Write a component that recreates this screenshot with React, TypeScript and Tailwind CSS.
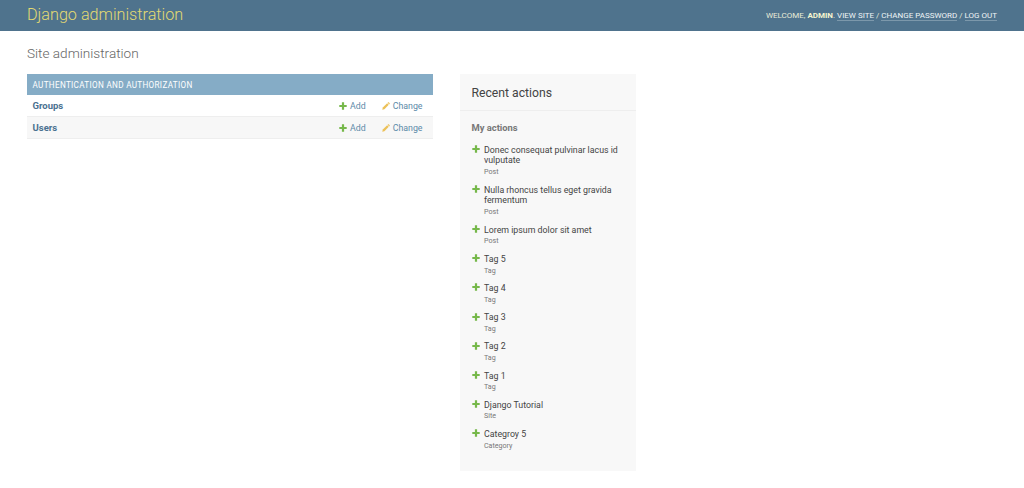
import React from 'react';

const PlusIcon = ({ className }: { className?: string }) => (
  <svg className={className} viewBox="0 0 8 8" fill="#76b84a">
    <path d="M2.9 0.3h2.2v2.6h2.6v2.2h-2.6v2.6h-2.2v-2.6h-2.6v-2.2h2.6z" />
  </svg>
);

const PencilIcon = () => (
  <svg className="w-[8px] h-[8px] shrink-0" viewBox="0 0 9 9" fill="#ecc158">
    <path d="M0.3 8.7l0.6-2.4 4.9-4.9 1.8 1.8-4.9 4.9z" />
    <path d="M6.3 0.9l0.6-0.6c0.2-0.2 0.5-0.2 0.7 0l1.1 1.1c0.2 0.2 0.2 0.5 0 0.7l-0.6 0.6z" />
  </svg>
);

const models = [
  { name: 'Groups', alt: false },
  { name: 'Users', alt: true },
];

const actions = [
  { title: ['Donec consequat pulvinar lacus id', 'vulputate'], type: 'Post' },
  { title: ['Nulla rhoncus tellus eget gravida', 'fermentum'], type: 'Post' },
  { title: ['Lorem ipsum dolor sit amet'], type: 'Post' },
  { title: ['Tag 5'], type: 'Tag' },
  { title: ['Tag 4'], type: 'Tag' },
  { title: ['Tag 3'], type: 'Tag' },
  { title: ['Tag 2'], type: 'Tag' },
  { title: ['Tag 1'], type: 'Tag' },
  { title: ['Django Tutorial'], type: 'Site' },
  { title: ['Categroy 5'], type: 'Category' },
];

const App = () => {
  return (
    <div className="min-h-[488px] bg-white font-['Roboto',sans-serif] text-[#333]">
      {/* Header */}
      <header className="h-[31px] bg-[#4f738d] flex items-center justify-between pl-[27px] pr-[27px]">
        <div className="text-[16.2px] font-light text-[#e3da72] leading-none pb-[1px]">Django administration</div>
        <div className="text-[8px] uppercase text-[#e9ecd8] whitespace-nowrap">
          Welcome, <strong className="font-bold text-[#f6f5d0]">Admin</strong>.{' '}
          <span className="text-[#eef3f6] border-b border-[#7c98ab]">View site</span> /{' '}
          <span className="text-[#eef3f6] border-b border-[#7c98ab]">Change password</span> /{' '}
          <span className="text-[#eef3f6] border-b border-[#7c98ab]">Log out</span>
        </div>
      </header>

      <main className="pl-[27px] pt-[14px]">
        <h1 className="text-[13.6px] font-light text-[#666] leading-[16px] mb-[13px]">Site administration</h1>

        <div className="flex items-start gap-[27px]">
          {/* App list */}
          <section className="w-[406px]">
            <div className="h-[21px] bg-[#85acc6] text-white text-[8.15px] uppercase tracking-[0.04em] pl-[5.5px] pt-[1px] flex items-center">
              Authentication and authorization
            </div>
            {models.map((m) => (
              <div
                key={m.name}
                className={`h-[22px] flex items-center border-b border-[#eeeeee] pl-[5.5px] pr-[10.5px] ${m.alt ? 'bg-[#f7f7f7]' : 'bg-white'}`}
              >
                <span className="text-[9.5px] font-bold text-[#4a7190] flex-1 pt-[1px]">{m.name}</span>
                <span className="flex items-center gap-[3px] text-[8.8px] text-[#5b8aa8] leading-[12px]">
                  <PlusIcon className="w-[8px] h-[8px] shrink-0" />
                  <span className="pt-[1px]">Add</span>
                </span>
                <span className="flex items-center gap-[3px] text-[8.8px] text-[#5b8aa8] leading-[12px] ml-[16px]">
                  <PencilIcon />
                  <span className="pt-[1px]">Change</span>
                </span>
              </div>
            ))}
          </section>

          {/* Recent actions */}
          <aside className="w-[176px] h-[397px] bg-[#f8f8f8] text-[#333]">
            <div className="h-[37px] border-b border-[#eeeeee] pl-[11.5px] pt-[1.5px] flex items-center text-[12.2px] text-[#444]">
              Recent actions
            </div>
            <div className="pl-[11.5px] pr-[8px] pt-[11px]">
              <div className="text-[9.4px] font-bold text-[#777] leading-[12px] mb-[10.6px]">My actions</div>
              <ul className="flex flex-col gap-[7.2px]">
                {actions.map((a, i) => (
                  <li key={i} className="flex">
                    <PlusIcon className="w-[8px] h-[8px] mt-[0.5px] mr-[4.5px] shrink-0" />
                    <div>
                      <div className="text-[8.8px] leading-[10.8px] text-[#444]">
                        {a.title.map((line) => (
                          <div key={line}>{line}</div>
                        ))}
                      </div>
                      <div className="text-[7.1px] leading-[11.2px] text-[#777]">{a.type}</div>
                    </div>
                  </li>
                ))}
              </ul>
            </div>
          </aside>
        </div>
      </main>
    </div>
  );
};

export default App;
